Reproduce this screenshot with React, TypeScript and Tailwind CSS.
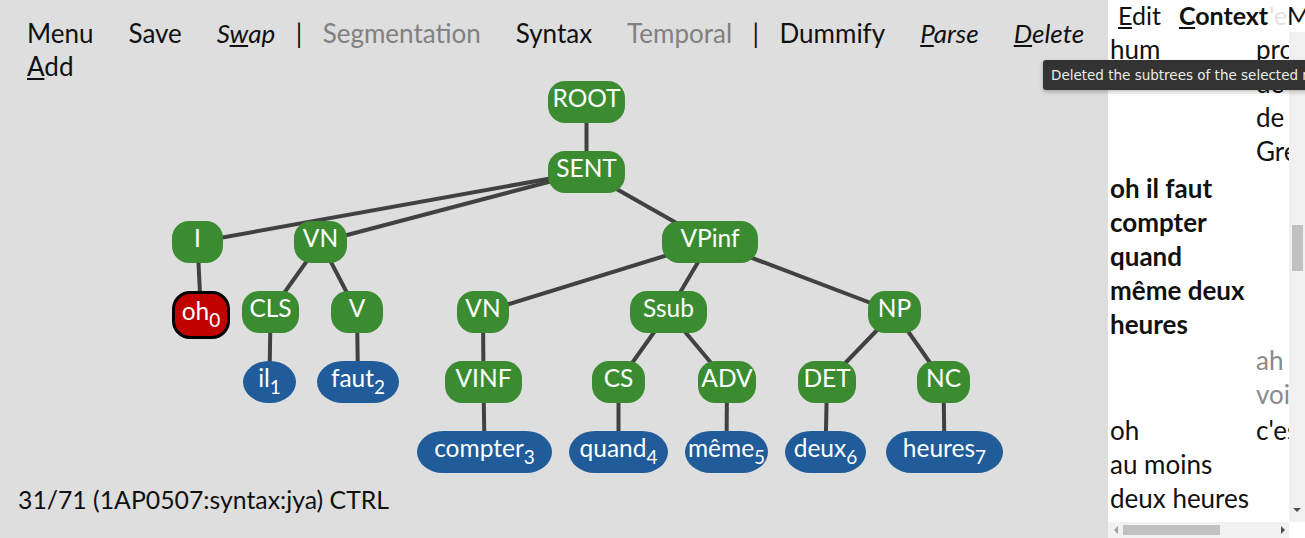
import React from "react";

type N = {
  id: string;
  label: string;
  sub?: string;
  x1: number;
  x2: number;
  r: number;
  k: "g" | "b" | "r";
  p?: string;
};

const ROWS = [81, 151, 221, 291, 361, 431];

const nodes: N[] = [
  { id: "ROOT", label: "ROOT", x1: 548, x2: 625, r: 0, k: "g" },
  { id: "SENT", label: "SENT", x1: 548, x2: 625, r: 1, k: "g", p: "ROOT" },
  { id: "I", label: "I", x1: 172, x2: 223, r: 2, k: "g", p: "SENT" },
  { id: "VN", label: "VN", x1: 294, x2: 347, r: 2, k: "g", p: "SENT" },
  { id: "VPinf", label: "VPinf", x1: 662, x2: 758, r: 2, k: "g", p: "SENT" },
  { id: "oh", label: "oh", sub: "0", x1: 172, x2: 230, r: 3, k: "r", p: "I" },
  { id: "CLS", label: "CLS", x1: 242, x2: 299, r: 3, k: "g", p: "VN" },
  { id: "V", label: "V", x1: 331, x2: 383, r: 3, k: "g", p: "VN" },
  { id: "VN2", label: "VN", x1: 457, x2: 509, r: 3, k: "g", p: "VPinf" },
  { id: "Ssub", label: "Ssub", x1: 630, x2: 707, r: 3, k: "g", p: "VPinf" },
  { id: "NP", label: "NP", x1: 868, x2: 921, r: 3, k: "g", p: "VPinf" },
  { id: "il", label: "il", sub: "1", x1: 243, x2: 296, r: 4, k: "b", p: "CLS" },
  { id: "faut", label: "faut", sub: "2", x1: 317, x2: 399, r: 4, k: "b", p: "V" },
  { id: "VINF", label: "VINF", x1: 445, x2: 522, r: 4, k: "g", p: "VN2" },
  { id: "CS", label: "CS", x1: 592, x2: 645, r: 4, k: "g", p: "Ssub" },
  { id: "ADV", label: "ADV", x1: 698, x2: 756, r: 4, k: "g", p: "Ssub" },
  { id: "DET", label: "DET", x1: 798, x2: 856, r: 4, k: "g", p: "NP" },
  { id: "NC", label: "NC", x1: 917, x2: 970, r: 4, k: "g", p: "NP" },
  { id: "compter", label: "compter", sub: "3", x1: 417, x2: 552, r: 5, k: "b", p: "VINF" },
  { id: "quand", label: "quand", sub: "4", x1: 569, x2: 668, r: 5, k: "b", p: "CS" },
  { id: "meme", label: "même", sub: "5", x1: 685, x2: 768, r: 5, k: "b", p: "ADV" },
  { id: "deux", label: "deux", sub: "6", x1: 785, x2: 866, r: 5, k: "b", p: "DET" },
  { id: "heures", label: "heures", sub: "7", x1: 886, x2: 1003, r: 5, k: "b", p: "NC" },
];

const byId: Record<string, N> = {};
nodes.forEach((n) => (byId[n.id] = n));

function center(n: N) {
  const h = n.k === "r" ? 48 : 42;
  return { x: (n.x1 + n.x2) / 2, y: ROWS[n.r] + h / 2 };
}

function TreeNode({ n }: { n: N }) {
  const cls =
    n.k === "g"
      ? "bg-[#3b8c31] rounded-[17px]"
      : n.k === "b"
      ? "bg-[#1f5c99] rounded-[26px/21px]"
      : "bg-[#c10000] border-[3px] border-black rounded-[18px]";
  return (
    <div
      className={
        "absolute text-white text-[24.5px] leading-[33px] text-center whitespace-nowrap " +
        cls
      }
      style={{
        left: n.x1,
        top: ROWS[n.r],
        width: n.x2 - n.x1,
        height: n.k === "r" ? 48 : 42,
      }}
    >
      {n.label}
      {n.sub && (
        <span className="relative top-[7px] text-[19px] leading-none">{n.sub}</span>
      )}
    </div>
  );
}

function Item({
  children,
  gray,
  italic,
}: {
  children: React.ReactNode;
  gray?: boolean;
  italic?: boolean;
}) {
  return (
    <span
      className={
        "px-[17.5px] " + (gray ? "text-[#808080] " : "") + (italic ? "italic" : "")
      }
    >
      {children}
    </span>
  );
}

function Sep() {
  return <span className="px-[3px]">|</span>;
}

export default function App() {
  return (
    <div className="relative flex w-[1305px] h-[538px] overflow-hidden font-[Lato,sans-serif] text-[#111]">
      {/* Left: editor area */}
      <div className="relative w-[1108px] shrink-0 flex flex-col bg-[#dedede]">
        <div className="relative z-10 pl-[9.5px] pt-[17px] text-[26px] leading-[33px]">
          <div className="flex whitespace-nowrap">
            <Item>Menu</Item>
            <Item>Save</Item>
            <Item italic>
              S<span className="underline">w</span>ap
            </Item>
            <Sep />
            <Item gray>Segmentation</Item>
            <Item>Syntax</Item>
            <Item gray>Temporal</Item>
            <Sep />
            <Item>Dummify</Item>
            <Item italic>
              <span className="underline">P</span>arse
            </Item>
            <Item italic>
              <span className="underline">D</span>elete
            </Item>
          </div>
          <div className="flex">
            <Item>
              <span className="underline">A</span>dd
            </Item>
          </div>
        </div>

        {/* Tree canvas */}
        <div className="absolute inset-0">
          <svg className="absolute inset-0" width="1108" height="538">
            {nodes
              .filter((n) => n.p)
              .map((n) => {
                const a = center(byId[n.p as string]);
                const b = center(n);
                return (
                  <line
                    key={n.id}
                    x1={a.x}
                    y1={a.y}
                    x2={b.x}
                    y2={b.y}
                    stroke="#414141"
                    strokeWidth={4}
                  />
                );
              })}
          </svg>
          {nodes.map((n) => (
            <TreeNode key={n.id} n={n} />
          ))}
        </div>

        <div className="flex-1" />
        <div className="relative z-10 pl-[18px] pb-[22px] text-[24.8px] leading-[33px]">
          31/71 (1AP0507:syntax:jya) CTRL
        </div>
      </div>

      {/* Right: context panel */}
      <div className="w-[197px] shrink-0 h-full bg-white flex flex-col">
        <div className="h-[32px] flex text-[25px] leading-[30px] pl-[10px] whitespace-nowrap overflow-hidden">
          <span className="shrink-0">
            <span className="underline">E</span>dit
          </span>
          <span className="shrink-0 ml-[18px] font-bold">
            <span className="underline">C</span>ontext
          </span>
          <span className="shrink-0 ml-[1px] text-[#e3e3e3]">'e</span>
          <span className="shrink-0">M</span>
        </div>
        <div className="flex-1 flex min-h-0">
          <div className="flex-1 overflow-hidden text-[26px] leading-[34px] pl-[2px] whitespace-nowrap">
            <div className="flex pb-[3px]">
              <div className="w-[146px] shrink-0">hum</div>
              <div className="shrink-0">
                <div>prononcer</div>
                <div>de</div>
                <div>de</div>
                <div>Grenoble</div>
              </div>
            </div>
            <div className="flex pb-[2px]">
              <div className="w-[146px] shrink-0 font-bold">
                <div>oh il faut</div>
                <div>compter</div>
                <div>quand</div>
                <div>même deux</div>
                <div>heures</div>
              </div>
              <div />
            </div>
            <div className="flex pb-[2px]">
              <div className="w-[146px] shrink-0" />
              <div className="shrink-0 text-[#8a8a8a]">
                <div>ah</div>
                <div>voilà</div>
              </div>
            </div>
            <div className="flex">
              <div className="w-[146px] shrink-0">
                <div>oh</div>
                <div>au moins</div>
                <div>deux heures</div>
              </div>
              <div className="shrink-0">c'est</div>
            </div>
          </div>
          {/* vertical scrollbar */}
          <div className="w-[16px] shrink-0 bg-[#f1f1f1] flex flex-col items-center">
            <div className="h-[193px]" />
            <div className="w-[11px] h-[46px] bg-[#c1c1c1]" />
            <div className="flex-1" />
            <svg width="8" height="6" className="mb-[9px]">
              <polygon points="0,1 8,1 4,5" fill="#505050" />
            </svg>
          </div>
        </div>
        {/* horizontal scrollbar */}
        <div className="h-[16px] flex">
          <div className="flex-1 bg-[#f1f1f1] flex items-center">
            <svg width="6" height="8" className="ml-[5px]">
              <polygon points="5,0 5,8 1,4" fill="#a3a3a3" />
            </svg>
            <div className="ml-[4px] w-[97px] h-[10px] bg-[#c1c1c1]" />
            <div className="flex-1" />
            <svg width="6" height="8" className="mr-[3px]">
              <polygon points="1,0 1,8 5,4" fill="#505050" />
            </svg>
          </div>
          <div className="w-[16px] bg-white" />
        </div>
      </div>

      {/* Tooltip */}
      <div className="absolute left-[1043px] top-[60px] h-[30px] pl-[8px] pr-[10px] bg-[#333333] rounded-[3px] shadow-[0_2px_4px_rgba(0,0,0,0.25)] text-[#ececec] text-[13.5px] leading-[30px] whitespace-nowrap font-['DejaVu_Sans',sans-serif]">
        Deleted the subtrees of the selected nodes
      </div>
    </div>
  );
}
